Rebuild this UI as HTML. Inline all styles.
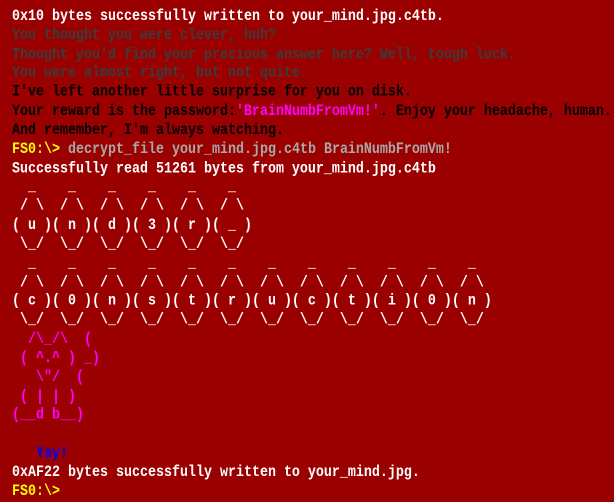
<!DOCTYPE html>
<html><head><meta charset="utf-8"><style>
html,body{margin:0;padding:0;background:#9a0000;width:614px;height:485px;overflow:hidden}
pre{margin:0;position:absolute;left:12px;top:8px;font-family:"Liberation Mono",monospace;font-size:13.33px;line-height:15.8333px;color:#fff;white-space:pre;font-weight:bold;transform:scaleY(1.2);transform-origin:0 0}
.d{color:#3c3c3c}.k{color:#000}.m{color:#ff00ff}.y{color:#ffff00}.g{color:#a8a8a8}.b{color:#0000ff}
</style></head><body><pre>0x10 bytes successfully written to your_mind.jpg.c4tb.
<span class="d">You thought you were clever, huh?
Thought you'd find your precious answer here? Well, tough luck.
You were almost right, but not quite.</span>
<span class="k">I've left another little surprise for you on disk.
Your reward is the password:</span><span class="m">'BrainNumbFromVm!'</span><span class="k">. Enjoy your headache, human.
And remember, I'm always watching.</span>
<span class="y">FS0:\&gt;</span> <span class="g">decrypt_file your_mind.jpg.c4tb BrainNumbFromVm!</span>
Successfully read 51261 bytes from your_mind.jpg.c4tb
  _    _    _    _    _    _
 / \  / \  / \  / \  / \  / \
( u )( n )( d )( 3 )( r )( _ )
 \_/  \_/  \_/  \_/  \_/  \_/
  _    _    _    _    _    _    _    _    _    _    _    _
 / \  / \  / \  / \  / \  / \  / \  / \  / \  / \  / \  / \
( c )( 0 )( n )( s )( t )( r )( u )( c )( t )( i )( 0 )( n )
 \_/  \_/  \_/  \_/  \_/  \_/  \_/  \_/  \_/  \_/  \_/  \_/
<span class="m">  /\_/\  (
 ( ^.^ ) _)
   \"/  (
 ( | | )
(__d b__)</span>

<span class="b">   Yay!</span>
0xAF22 bytes successfully written to your_mind.jpg.
<span class="y">FS0:\&gt;</span></pre></body></html>
